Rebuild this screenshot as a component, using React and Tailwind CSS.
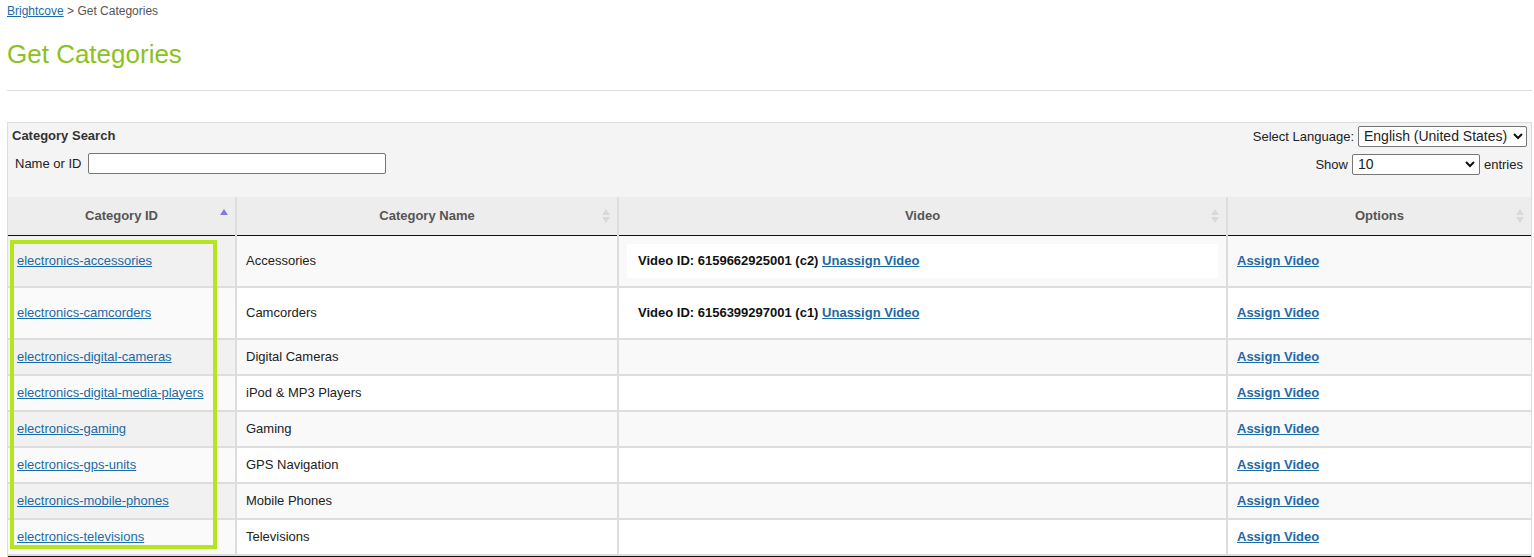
import React from "react";

const rows = [
  { id: "electronics-accessories", name: "Accessories", video: "6159662925001 (c2)" },
  { id: "electronics-camcorders", name: "Camcorders", video: "6156399297001 (c1)" },
  { id: "electronics-digital-cameras", name: "Digital Cameras" },
  { id: "electronics-digital-media-players", name: "iPod & MP3 Players" },
  { id: "electronics-gaming", name: "Gaming" },
  { id: "electronics-gps-units", name: "GPS Navigation" },
  { id: "electronics-mobile-phones", name: "Mobile Phones" },
  { id: "electronics-televisions", name: "Televisions" },
];

function SortIcon({ active }) {
  return (
    <svg width="8" height="14" viewBox="0 0 8 14" className="absolute right-[7px] top-1/2 -translate-y-1/2">
      {active ? (
        <path d="M0 6 L4 0 L8 6 Z" fill="#7d7fd6" />
      ) : (
        <>
          <path d="M0 6 L4 0 L8 6 Z" fill="#d9d9d9" />
          <path d="M0 8 L4 14 L8 8 Z" fill="#d9d9d9" />
        </>
      )}
    </svg>
  );
}

function Chevron() {
  return (
    <svg width="10" height="7" viewBox="0 0 10 7">
      <path d="M1 1 L5 5 L9 1" fill="none" stroke="#111" strokeWidth="2" />
    </svg>
  );
}

export default function App() {
  const link = "text-[#1d6aa5] underline";
  return (
    <div className="min-h-screen bg-white pl-[7px] pr-[2px] pt-[4px] text-[13px] text-[#222]" style={{ fontFamily: '"Liberation Sans", Arial, sans-serif' }}>
      <div className="text-[12px] leading-[14px] text-[#555]">
        <a className="text-[#1d6aa5] underline">Brightcove</a> &gt; Get Categories
      </div>
      <h1 className="mt-[21px] text-[26px] leading-[30px] text-[#8cc220]">Get Categories</h1>
      <div className="mt-[21px] border-t border-[#dddddd]" />

      <div className="mt-[31px] border border-[#dddddd] bg-[#f4f4f4] relative">
        <div className="flex justify-between h-[74px]">
          <div>
            <div className="pl-[4px] pt-[5px] leading-[16px] font-bold text-[#333]">Category Search</div>
            <div className="flex items-center pl-[7px] mt-[9px] gap-[7px]">
              <span className="text-[#222]">Name or ID</span>
              <div className="w-[298px] h-[21px] bg-white border border-[#767676] rounded-[2px]" />
            </div>
          </div>
          <div className="flex flex-col items-end pr-[4px] pt-[3px]">
            <div className="flex items-center gap-[4px]">
              <span>Select Language:</span>
              <div className="h-[21px] w-[169px] bg-white border border-[#767676] rounded-[2px] flex items-center justify-between pl-[5px] pr-[3px] text-[14px]">
                <span>English (United States)</span>
                <Chevron />
              </div>
            </div>
            <div className="flex items-center gap-[4px] mt-[7px] pr-[4px]">
              <span>Show</span>
              <div className="h-[21px] w-[128px] bg-white border border-[#767676] rounded-[2px] flex items-center justify-between pl-[5px] pr-[4px] text-[14px]">
                <span>10</span>
                <Chevron />
              </div>
              <span>entries</span>
            </div>
          </div>
        </div>

        <table className="w-full border-collapse table-fixed">
          <colgroup>
            <col className="w-[228px]" />
            <col className="w-[382px]" />
            <col className="w-[609px]" />
            <col />
          </colgroup>
          <thead>
            <tr className="bg-[#ededed] border-b border-[#111]">
              {["Category ID", "Category Name", "Video", "Options"].map((h, i) => (
                <th key={h} className={"relative h-[38px] font-bold text-[#555] leading-[18px] text-center " + (i > 0 ? "border-l-2 border-[#dddddd]" : "")}>
                  {h}
                  <SortIcon active={i === 0} />
                </th>
              ))}
            </tr>
          </thead>
          <tbody>
            {rows.map((r, i) => {
              const odd = i % 2 === 0;
              return (
                <tr key={r.id} className={"border-b-2 border-[#dddddd] " + (odd ? "bg-[#f9f9f9]" : "bg-white")}>
                  <td className={"px-[9px] py-[8px] leading-[18px] " + (odd ? "bg-[#f1f1f1]" : "bg-[#fafafa]")}>
                    <a className={link}>{r.id}</a>
                  </td>
                  <td className="border-l-2 border-[#dddddd] px-[9px] py-[8px] leading-[18px]">{r.name}</td>
                  <td className="border-l-2 border-[#dddddd] px-[8px] py-[8px] leading-[18px]">
                    {r.video && (
                      <div className="bg-white px-[11px] py-[8px] font-bold text-[#111]">
                        Video ID: {r.video} <a className={link}>Unassign Video</a>
                      </div>
                    )}
                  </td>
                  <td className="border-l-2 border-[#dddddd] px-[9px] py-[8px] leading-[18px] font-bold">
                    <a className={link}>Assign Video</a>
                  </td>
                </tr>
              );
            })}
          </tbody>
        </table>
        <div className="border-t border-[#111] h-[3px]" />

        <div className="absolute left-[2px] top-[117px] w-[207px] h-[309px] border-[4px] border-[#b5e61d] pointer-events-none" />
      </div>
    </div>
  );
}
